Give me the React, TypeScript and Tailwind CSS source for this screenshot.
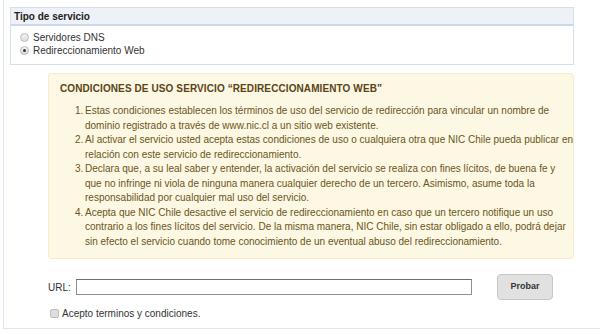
import { useState } from 'react';

const terms: { n: string; lines: string[] }[] = [
  {
    n: '1.',
    lines: [
      'Estas condiciones establecen los términos de uso del servicio de redirección para vincular un nombre de',
      'dominio registrado a través de www.nic.cl a un sitio web existente.',
    ],
  },
  {
    n: '2.',
    lines: [
      'Al activar el servicio usted acepta estas condiciones de uso o cualquiera otra que NIC Chile pueda publicar en',
      'relación con este servicio de redireccionamiento.',
    ],
  },
  {
    n: '3.',
    lines: [
      'Declara que, a su leal saber y entender, la activación del servicio se realiza con fines lícitos, de buena fe y',
      'que no infringe ni viola de ninguna manera cualquier derecho de un tercero. Asimismo, asume toda la',
      'responsabilidad por cualquier mal uso del servicio.',
    ],
  },
  {
    n: '4.',
    lines: [
      'Acepta que NIC Chile desactive el servicio de redireccionamiento en caso que un tercero notifique un uso',
      'contrario a los fines lícitos del servicio. De la misma manera, NIC Chile, sin estar obligado a ello, podrá dejar',
      'sin efecto el servicio cuando tome conocimiento de un eventual abuso del redireccionamiento.',
    ],
  },
];

function Radio({ checked, onClick }: { checked: boolean; onClick: () => void }) {
  return (
    <span
      onClick={onClick}
      className="w-[9px] h-[9px] rounded-full border border-[#b9b9b9] bg-gradient-to-b from-[#f4f4f4] to-[#dcdcdc] flex items-center justify-center cursor-pointer"
    >
      {checked && <span className="w-[3px] h-[3px] rounded-full bg-[#333]" />}
    </span>
  );
}

export default function App() {
  const [tipo, setTipo] = useState('web');
  const [url, setUrl] = useState('');
  const [acepto, setAcepto] = useState(false);

  return (
    <div className="w-[600px] h-[334px] overflow-hidden bg-white font-['Liberation_Sans',Arial,sans-serif]">
      <div className="ml-[3px] border-l border-b border-[#dfe6f2] pl-[6px] pt-[7px] pb-[9px]">
        {/* Tipo de servicio */}
        <div className="w-[564px] border border-[#d6dfee]">
          <div className="h-[18px] bg-[#eef1f7] border-b-2 border-[#cdd7ea] flex items-center pl-[3px] pt-[1px] text-[10px] font-bold text-[#222]">
            Tipo de servicio
          </div>
          <div className="pl-[9px] pt-[5px] pb-[7px] text-[10px] text-[#333]">
            <label className="flex items-center gap-[4px] h-[13px]">
              <Radio checked={tipo === 'dns'} onClick={() => setTipo('dns')} />
              <span>Servidores DNS</span>
            </label>
            <label className="flex items-center gap-[4px] h-[13px]">
              <Radio checked={tipo === 'web'} onClick={() => setTipo('web')} />
              <span>Redireccionamiento Web</span>
            </label>
          </div>
        </div>

        {/* Condiciones */}
        <div className="ml-[38px] mt-[8px] w-[526px] h-[186px] rounded-[3px] border border-[#f6ecc9] bg-[#fdf8e4] pl-[11px] pt-[9px] text-[#6b5520]">
          <div className="text-[10px] font-bold text-[#5a4416] leading-[12px] tracking-[0.1px]">
            CONDICIONES DE USO SERVICIO “REDIRECCIONAMIENTO WEB”
          </div>
          <div className="mt-[9px] pl-[15px] text-[10px] leading-[14.5px]">
            {terms.map((t) => (
              <div key={t.n} className="flex">
                <span className="w-[10px] shrink-0">{t.n}</span>
                <div>
                  {t.lines.map((l, i) => (
                    <div key={i} className="whitespace-nowrap">{l}</div>
                  ))}
                </div>
              </div>
            ))}
          </div>
        </div>

        {/* URL */}
        <div className="mt-[15px] flex items-center h-[26px] text-[10px] text-[#333]">
          <span className="ml-[38px] w-[28px]">URL:</span>
          <input
            value={url}
            onChange={(e) => setUrl(e.target.value)}
            className="w-[396px] h-[16px] border border-[#8f8f8f] border-t-[#6f6f6f] outline-none px-1 text-[10px]"
          />
          <button className="ml-[25px] w-[56px] h-[26px] rounded-[4px] border border-[#c6c6c6] bg-[#e1e1e1] text-[9px] font-bold text-[#333]">
            Probar
          </button>
        </div>
        <label className="mt-[7px] ml-[40px] flex items-center gap-[3px] text-[10px] text-[#333] h-[12px]">
          <span
            onClick={() => setAcepto(!acepto)}
            className="w-[9px] h-[9px] rounded-[2px] border border-[#bdbdbd] bg-[#dedede] flex items-center justify-center text-[7px] leading-none"
          >
            {acepto ? '✓' : ''}
          </span>
          <span>Acepto terminos y condiciones.</span>
        </label>
      </div>
    </div>
  );
}
